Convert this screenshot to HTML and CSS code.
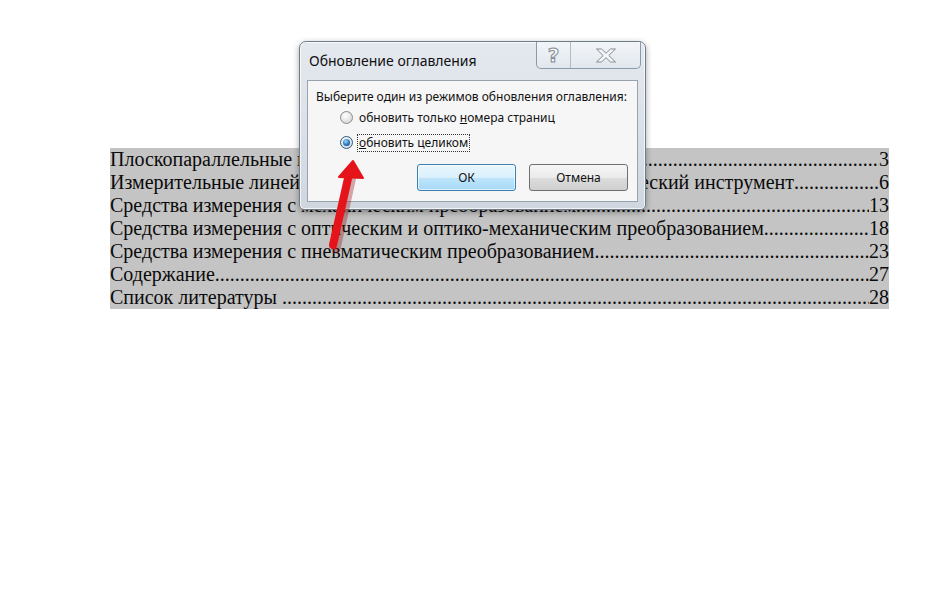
FILE: index.html
```html
<!DOCTYPE html>
<html lang="ru">

<head>
    <meta charset="UTF-8">
    <title>Обновление оглавления</title>
    <link rel="stylesheet" href="styles.css">
</head>

<body>
    <div class="page">
        <!-- Table of contents (selected) -->
        <div class="toc">
            <div class="toc-row"><span class="toc-title">Плоскопараллельные концевые меры длины</span><span class="leader"></span><span class="toc-num">3</span></div>
            <div class="toc-row"><span class="toc-title">Измерительные линейки и штангенинструмент. Микрометрический инструмент</span><span class="leader"></span><span class="toc-num">6</span></div>
            <div class="toc-row"><span class="toc-title">Средства измерения с механическим преобразованием</span><span class="leader"></span><span class="toc-num">13</span></div>
            <div class="toc-row"><span class="toc-title">Средства измерения с оптическим и оптико-механическим преобразованием</span><span class="leader"></span><span class="toc-num">18</span></div>
            <div class="toc-row"><span class="toc-title">Средства измерения с пневматическим преобразованием</span><span class="leader"></span><span class="toc-num">23</span></div>
            <div class="toc-row"><span class="toc-title">Содержание</span><span class="leader"></span><span class="toc-num">27</span></div>
            <div class="toc-row"><span class="toc-title">Список литературы&nbsp;</span><span class="leader"></span><span class="toc-num">28</span></div>
        </div>

        <!-- Dialog -->
        <div class="dialog">
            <div class="dialog-titlebar">
                <span class="dialog-title">Обновление оглавления</span>
                <div class="caption-buttons">
                    <span class="cap-btn cap-help">?</span>
                    <span class="cap-btn cap-close">
                        <svg width="22" height="15" viewBox="0 0 22 15">
                            <path d="M1.5 1 H6.5 L11 5.3 L15.5 1 H20.5 L13.8 7.5 L20.5 14 H15.5 L11 9.7 L6.5 14 H1.5 L8.2 7.5 Z" fill="#f4f6f8" stroke="#858b93" stroke-width="1"/>
                        </svg>
                    </span>
                </div>
            </div>
            <div class="dialog-panel">
                <div class="prompt">Выберите один из режимов обновления оглавления:</div>
                <div class="options">
                    <label class="option"><span class="radio"></span><span class="option-text">обновить только <u>н</u>омера страниц</span></label>
                    <label class="option"><span class="radio checked"></span><span class="option-text focused"><u>о</u>бновить целиком</span></label>
                </div>
                <div class="buttons">
                    <button class="btn btn-default">ОК</button>
                    <button class="btn">Отмена</button>
                </div>
            </div>
        </div>

        <!-- Red pointer arrow -->
        <svg class="arrow" width="931" height="606" viewBox="0 0 931 606">
            <line x1="334" y1="247" x2="350" y2="174" stroke="#8a1010" stroke-opacity="0.35" stroke-width="9" stroke-linecap="round" transform="translate(2 2)"/>
            <line x1="333" y1="245" x2="349" y2="174" stroke="#e4141a" stroke-width="8" stroke-linecap="round"/>
            <polygon points="353,161 339,177 363,178" fill="#e4141a" stroke="#e4141a" stroke-width="2" stroke-linejoin="round"/>
        </svg>
    </div>
</body>

</html>
```

FILE: styles.css
```css
/* Global */
body {
    margin: 0;
    padding: 0;
    background: #ffffff;
}

.page {
    position: relative;
    width: 931px;
    height: 606px;
    overflow: hidden;
}

/* Table of contents */
.toc {
    margin: 148px 0 0 110px;
    width: 779px;
    background: #c4c4c4;
    font-family: "Liberation Serif", "Times New Roman", serif;
    font-size: 20px;
    color: #0a0a0a;
}

.toc-row {
    display: flex;
    height: 23px;
    line-height: 23px;
    white-space: nowrap;
}

.toc-title {
    flex: none;
}

.leader {
    flex: 1;
    overflow: hidden;
}

.leader::after {
    content: "................................................................................................................................................................................................................................";
}

.toc-num {
    flex: none;
}

/* Dialog */
.dialog {
    position: absolute;
    left: 299px;
    top: 41px;
    width: 345px;
    height: 167px;
    border: 1px solid #6f7c8a;
    border-radius: 7px 7px 5px 5px;
    background: linear-gradient(#e4e9ef, #d9dfe6 60%, #d0d6de);
    box-shadow: 0 2px 6px rgba(0, 0, 0, 0.35), inset 0 0 0 1px rgba(255, 255, 255, 0.7);
    font-family: "Noto Sans", "Open Sans", sans-serif;
    color: #111;
    display: flex;
    flex-direction: column;
}

.dialog-titlebar {
    height: 38px;
    display: flex;
    justify-content: space-between;
    align-items: flex-start;
}

.dialog-title {
    margin: 9px 0 0 9px;
    font-size: 14px;
    line-height: 20px;
}

.caption-buttons {
    display: flex;
    margin-right: 4px;
    border: 1px solid #8d99a6;
    border-top: none;
    border-radius: 0 0 5px 5px;
    background: linear-gradient(#f2f5f8, #e1e7ee);
    height: 26px;
}

.cap-btn {
    display: flex;
    align-items: center;
    justify-content: center;
    height: 26px;
}

.cap-help {
    width: 33px;
    border-right: 1px solid #b2bcc6;
    font-family: "DejaVu Sans", sans-serif;
    font-size: 20px;
    font-weight: bold;
    color: #f4f6f8;
    -webkit-text-stroke: 1px #858b93;
}

.cap-close {
    width: 69px;
}

.dialog-panel {
    flex: 1;
    margin: 0 7px 7px 7px;
    border: 1px solid #98a3ae;
    background: #f6f6f6;
    padding: 8px 9px 0 8px;
    font-size: 12px;
}

.prompt {
    line-height: 16px;
}

.options {
    margin-left: 24px;
}

.option {
    display: flex;
    align-items: center;
    height: 25px;
}

.radio {
    width: 11px;
    height: 11px;
    border-radius: 50%;
    border: 1px solid #8b8b8b;
    background: radial-gradient(circle at 40% 35%, #ffffff, #dcdcdc 70%);
    margin-right: 5px;
    position: relative;
}

.radio.checked {
    border-color: #2c5d8a;
}

.radio.checked::after {
    content: "";
    position: absolute;
    left: 2px;
    top: 2px;
    width: 7px;
    height: 7px;
    border-radius: 50%;
    background: radial-gradient(circle at 40% 35%, #9fd6ff, #1d6fb8 60%, #0c3d6e);
}

.option-text {
    line-height: 16px;
    padding: 0 1px;
}

.option-text.focused {
    outline: 1px dotted #333;
}

.buttons {
    display: flex;
    justify-content: flex-end;
    gap: 13px;
    margin-top: 9px;
}

.btn {
    width: 99px;
    height: 27px;
    border: 1px solid #707070;
    border-radius: 3px;
    background: linear-gradient(#f6f6f6, #ebebeb 50%, #dddddd 51%, #cfcfcf);
    font-family: "Noto Sans", "Open Sans", sans-serif;
    font-size: 12px;
    color: #111;
    padding: 0;
}

.btn-default {
    border-color: #3c7fb1;
    background: linear-gradient(#eaf6fd, #d9f0fc 50%, #bee6fd 51%, #a7d9f5);
    box-shadow: inset 0 0 0 1px rgba(255, 255, 255, 0.6);
}

/* Arrow overlay */
.arrow {
    position: absolute;
    left: 0;
    top: 0;
    pointer-events: none;
}
```
